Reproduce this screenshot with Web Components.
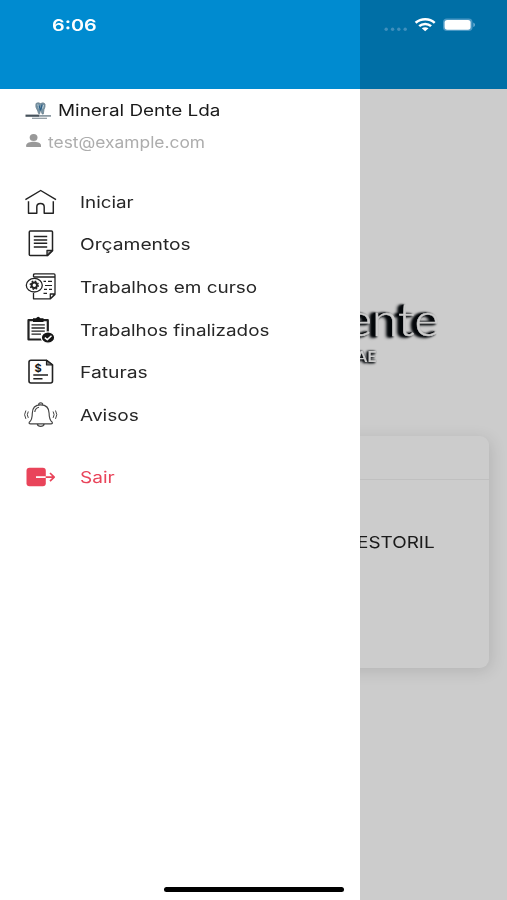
<!DOCTYPE html>
<html lang="pt">
<head>
<meta charset="utf-8">
<meta name="viewport" content="width=device-width, initial-scale=1">
<title>Mineral Dente</title>
<style>
    body {
        margin: 0;
        font-family: Inter, "Liberation Sans", sans-serif;
        background: #fff;
    }
</style>
</head>
<body>
<app-shell>
    <status-bar slot="status" time="6:06"></status-bar>
    <home-page slot="page"></home-page>
    <side-menu slot="menu">
        <user-info slot="user" name="Mineral Dente Lda" email="test@example.com"></user-info>
        <menu-item icon="home" width="54">Iniciar</menu-item>
        <menu-item icon="doc" width="110.5">Orçamentos</menu-item>
        <menu-item icon="progress" width="177.5">Trabalhos em curso</menu-item>
        <menu-item icon="done" width="189.5">Trabalhos finalizados</menu-item>
        <menu-item icon="invoice" width="67.5">Faturas</menu-item>
        <menu-item icon="bell" width="58.5">Avisos</menu-item>
        <menu-item slot="footer" class="exit" icon="exit" width="34.5" danger>Sair</menu-item>
    </side-menu>
</app-shell>

<script>
// Crea un template a partir de una cadena
function tpl(html) {
    const t = document.createElement('template');
    t.innerHTML = html;
    return t;
}

class BaseElement extends HTMLElement {
    constructor() {
        super();
        this.attachShadow({ mode: 'open' });
        this.shadowRoot.appendChild(this.constructor.template.content.cloneNode(true));
    }
    $(id) {
        return this.shadowRoot.getElementById(id);
    }
}

// Texto ensanchado horizontalmente hasta el ancho indicado en "width"
class WideText extends BaseElement {
    static template = tpl(`
        <style>
            :host { display: block; line-height: 20px; white-space: nowrap; }
            span { display: inline-block; transform-origin: 0 50%; }
        </style>
        <span id="text"><slot></slot></span>
    `);
    connectedCallback() {
        this.fit();
    }
    fit() {
        const width = parseFloat(this.getAttribute('width'));
        const span = this.$('text');
        const natural = span.offsetWidth;
        this.style.width = width + 'px';
        if (natural) span.style.transform = `scaleX(${width / natural})`;
    }
}

class StatusBar extends BaseElement {
    static template = tpl(`
        <style>
            :host {
                display: flex;
                justify-content: space-between;
                align-items: center;
                height: 49px;
                padding: 0 32px 0 52.4px;
                box-sizing: border-box;
                color: #fff;
            }
            wide-text { font-size: 16.5px; font-weight: 600; }
            svg { display: block; }
        </style>
        <wide-text id="time" width="44.5"></wide-text>
        <svg width="92" height="20" viewBox="0 0 92 20">
            <g fill="#3f8fbd">
                <circle cx="3.2" cy="14.3" r="1.7"/>
                <circle cx="9.6" cy="14.3" r="1.7"/>
                <circle cx="15.8" cy="14.3" r="1.7"/>
                <circle cx="22.2" cy="14.3" r="1.7"/>
            </g>
            <g fill="none" stroke="#fff" stroke-width="2.5">
                <path d="M32.6 7.8C38 3 46.5 3 51.7 7.8"/>
                <path d="M36.2 11.2C39.5 8.2 44.9 8.2 48.1 11.2"/>
            </g>
            <path d="M38.8 13.3Q42.1 11 45.5 13.3L42.2 16.3Z" fill="#fff"/>
            <rect x="60" y="3.6" width="29.5" height="12.4" rx="3.8" fill="#4a98c4"/>
            <rect x="61.6" y="4.9" width="26" height="9.8" rx="2.6" fill="#fff"/>
            <path d="M90.3 7.4Q92 8 92 9.7T90.3 11.9Z" fill="#6fb0d4"/>
        </svg>
    `);
    connectedCallback() {
        this.$('time').textContent = this.getAttribute('time');
        this.$('time').fit();
    }
}

// Pantalla principal, queda debajo del menú
class HomePage extends BaseElement {
    static template = tpl(`
        <style>
            :host {
                display: flex;
                flex-direction: column;
                height: 900px;
                background: #fff;
            }
            header { height: 89px; background: #008bd0; }
            .logo { height: 347px; }
            .logo svg { display: block; width: 507px; height: 347px; }
            /* sombra gruesa hacia la izquierda, como en el logo */
            .brand {
                filter: drop-shadow(-1.5px 0 .6px #05090d) drop-shadow(-2px .5px .8px #05090d) drop-shadow(-1.5px 1px 1px #05090d);
            }
            .tag {
                filter: drop-shadow(-1px 0 .8px #05090d) drop-shadow(-1px 1px 1px #05090d);
            }
            .card {
                margin: 0 18px;
                height: 232px;
                border-radius: 9px;
                background: #fff;
                box-shadow: 2px 3px 16px rgba(0, 0, 0, .12);
            }
            .card-head { height: 43px; border-bottom: 1px solid #f0f0f0; }
            .card-body { display: flex; justify-content: flex-end; padding: 52px 54px 0 0; }
            wide-text { font-size: 16.5px; color: #222; }
        </style>
        <header></header>
        <div class="logo">
            <svg viewBox="0 89 507 347" font-family="Lato, sans-serif" fill="#fff">
                <text class="brand" x="347" y="335.5" font-size="45.5" font-weight="300" textLength="92.5" lengthAdjust="spacingAndGlyphs" stroke="#fff" stroke-width=".5">ente</text>
                <text class="tag" x="356" y="361.7" font-size="15" font-weight="700" textLength="20.5" lengthAdjust="spacingAndGlyphs">AE</text>
            </svg>
        </div>
        <div class="card">
            <div class="card-head"></div>
            <div class="card-body"><wide-text width="78">ESTORIL</wide-text></div>
        </div>
    `);
}

class UserInfo extends BaseElement {
    static template = tpl(`
        <style>
            :host { display: flex; flex-direction: column; gap: 12px; padding: 11px 0 0 25px; }
            .row { display: flex; align-items: center; height: 20px; }
            svg { display: block; flex: none; }
            #name { margin-left: 6.4px; font-size: 16px; color: #1a1a1a; }
            #email { margin: 1px 0 0 5.5px; font-size: 15.5px; color: #adadad; }
        </style>
        <div class="row">
            <svg width="27" height="20" viewBox="0 0 27 20">
                <path d="M11 3.5Q13 2 15.5 3.5Q18.5 2 20 4Q20.5 7 19 9.5L18.3 14Q17 15 16.3 11.5L15.5 10.5L14.6 13.8Q13.2 14.5 12.8 11Q10 7 11 3.5Z" fill="#7794a5" stroke="#6d818e" stroke-width=".8"/>
                <path d="M12.8 4.5L14.5 9M18.5 5L17.6 8.5" stroke="#c6d8e2" stroke-width="1"/>
                <path d="M14 5.5L15.5 10.5M17 4.5L16 9.5" stroke="#2a5f88" stroke-width="1.2"/>
                <path d="M.5 15.7H14.5" stroke="#46525b" stroke-width="2.2"/>
                <path d="M14.5 15.9H26" stroke="#81909a" stroke-width="1.6"/>
                <path d="M7 18.3H22" stroke="#8b969e" stroke-width="1.2"/>
            </svg>
            <wide-text id="name" width="163"></wide-text>
        </div>
        <div class="row">
            <svg width="17" height="20" viewBox="0 0 17 20" fill="#999">
                <ellipse cx="8.6" cy="5.4" rx="3.9" ry="3.5"/>
                <path d="M1.2 15V13.3C1.2 10.8 5.5 9.8 8.6 9.8S16 10.8 16 13.3V15Z"/>
            </svg>
            <wide-text id="email" width="157"></wide-text>
        </div>
    `);
    connectedCallback() {
        for (const id of ['name', 'email']) {
            this.$(id).textContent = this.getAttribute(id);
            this.$(id).fit();
        }
    }
}

// Iconos del menú, todos sobre una caja de 36x30
const icons = {
    home: `
        <path d="M2.4 12.7L17.7 3.5L33 12.7M5.5 14.3V26.2H13.8V20C13.8 15.4 21.2 15.4 21.2 20V26.2H30.3V14.3" stroke-width="1.45"/>`,
    doc: `
        <path d="M7.3 2H28.5Q29.5 2 29.5 3V21.7L24.5 26.6H7.3Q6.3 26.6 6.3 25.6V3Q6.3 2 7.3 2Z" stroke-width="1.5"/>
        <path d="M29.5 21.3H24V26.6Z" fill="#999" stroke-width="1.3"/>
        <path d="M10.8 7.6H24.2M10.8 10.9H24.2M10.8 14.3H24.2M10.8 17.9H24.2" stroke-width="1.5"/>`,
    progress: `
        <path d="M10.5 5V3Q10.5 1.8 12 1.8H31Q32 1.8 32 3V22.5L27.5 26.8H10.5V21M10.5 5H32M32 22H27.3V26.8Z" stroke-width="1.3"/>
        <path d="M20.5 9.3H23M25 9.3H29M22 13.5H29M21 17.3H24M26 17.3H29M20.5 21.3H24" stroke-width="1.2"/>
        <ellipse cx="11.3" cy="13.2" rx="8" ry="6.8" fill="#fff" stroke-width="1.3"/>
        <circle cx="11.3" cy="13.2" r="2.7" stroke-width="2"/>
        <circle cx="11.3" cy="13.2" r="4.1" stroke-width="1.3" stroke-dasharray="1.6 1.62"/>`,
    done: `
        <path d="M5.5 5.2H24.8V24.5H5.5Z" stroke-width="2.2"/>
        <path d="M10 3.3H13Q15.2 .2 17.4 3.3H20.5V7H10Z" fill="#151515" stroke="none"/>
        <path d="M8.5 9.9H21.8M8.5 13H21.8M8.5 16.1H21.8M8.5 19.2H18" stroke-width="1.3"/>
        <ellipse cx="25" cy="22.5" rx="6.7" ry="5.7" fill="#151515" stroke="#fff" stroke-width="1.2"/>
        <path d="M21.8 22.6L24.3 24.6L28.5 20.8" stroke="#fff" stroke-width="1.5"/>`,
    invoice: `
        <path d="M8 3.3H23.5L29.5 8V24Q29.5 26 27.5 26H8Q6 26 6 24V5.3Q6 3.3 8 3.3Z" stroke-width="1.6"/>
        <path d="M23.5 3.3V8H29.5Z" fill="#777" stroke-width="1.2"/>
        <text x="15.1" y="14.7" text-anchor="middle" font-size="11" font-weight="700" fill="#151515" stroke="none">$</text>
        <path d="M10.3 18H25M10.3 21.8H19.5" stroke-width="1.5"/>`,
    bell: `
        <path d="M15.6 4.8Q15.6 2.8 17.7 2.8T19.8 4.8M17.7 4.8C12 4.8 9.3 8.5 9.3 13.3C9.3 19 8.5 20.5 6.3 22.3Q5.5 23.8 7.5 23.8H28Q30 23.8 29.2 22.3C27 20.5 26.1 19 26.1 13.3C26.1 8.5 23.4 4.8 17.7 4.8ZM14.2 24Q14.8 26.3 17.7 26.3T21.3 24M11.8 12Q12 8.2 16 7.2" stroke-width="1.15" stroke="#444"/>
        <path d="M5.3 11.5Q3.3 14.7 5.3 17.9M2.9 10.5Q.3 14.7 2.9 18.9M30.1 11.5Q32.1 14.7 30.1 17.9M32.5 10.5Q35.1 14.7 32.5 18.9" stroke-width="1" stroke="#444"/>`,
    exit: `
        <rect x="3.5" y="5.8" width="19.3" height="18.5" rx="3" fill="#e9445a" stroke="none"/>
        <path d="M13 15.1H22.8" stroke="#fff" stroke-width="1.7"/>
        <path d="M22.8 15.1H31M27 11L31.2 15.1L27 19.2" stroke="#e9445a" stroke-width="1.7"/>`
};

class MenuItem extends BaseElement {
    static template = tpl(`
        <style>
            :host {
                display: flex;
                align-items: center;
                height: 42.65px;
                padding-left: 23px;
                color: #262626;
                font-size: 16px;
            }
            :host([danger]) { color: #e9445a; }
            svg { display: block; flex: none; margin-right: 21.2px; }
        </style>
        <svg id="icon" width="36" height="30" viewBox="0 0 36 30" fill="none" stroke="#222" stroke-linejoin="round"></svg>
        <wide-text id="label"><slot></slot></wide-text>
    `);
    connectedCallback() {
        this.$('icon').innerHTML = icons[this.getAttribute('icon')];
        this.$('label').setAttribute('width', this.getAttribute('width'));
        this.$('label').fit();
    }
}

class SideMenu extends BaseElement {
    static template = tpl(`
        <style>
            :host {
                display: flex;
                flex-direction: column;
                width: 360.4px;
                height: 900px;
                background: #fff;
            }
            header { flex: none; height: 89px; background: #008bd0; }
            nav { padding-top: 28.35px; }
            footer { padding-top: 19.6px; }
        </style>
        <header></header>
        <slot name="user"></slot>
        <nav><slot></slot></nav>
        <footer><slot name="footer"></slot></footer>
    `);
}

// Apila la página, el velo oscuro, el menú y la barra de estado en la misma celda
class AppShell extends BaseElement {
    static template = tpl(`
        <style>
            :host {
                display: grid;
                grid-template: 900px / 507px;
                width: 507px;
                height: 900px;
                overflow: hidden;
            }
            ::slotted(*), .veil, .indicator { grid-area: 1 / 1; }
            .veil { background: rgba(0, 0, 0, .2); z-index: 1; }
            ::slotted([slot="menu"]) { z-index: 2; }
            ::slotted([slot="status"]) { z-index: 3; }
            .indicator {
                z-index: 3;
                align-self: end;
                justify-self: center;
                width: 180px;
                height: 5px;
                margin: 0 0 8px 1px;
                border-radius: 3px;
                background: #000;
            }
        </style>
        <slot name="page"></slot>
        <div class="veil"></div>
        <slot name="menu"></slot>
        <slot name="status"></slot>
        <div class="indicator"></div>
    `);
}

// wide-text va primero porque los demás lo usan dentro de su template
customElements.define('wide-text', WideText);
customElements.define('status-bar', StatusBar);
customElements.define('home-page', HomePage);
customElements.define('user-info', UserInfo);
customElements.define('menu-item', MenuItem);
customElements.define('side-menu', SideMenu);
customElements.define('app-shell', AppShell);
</script>
</body>
</html>
